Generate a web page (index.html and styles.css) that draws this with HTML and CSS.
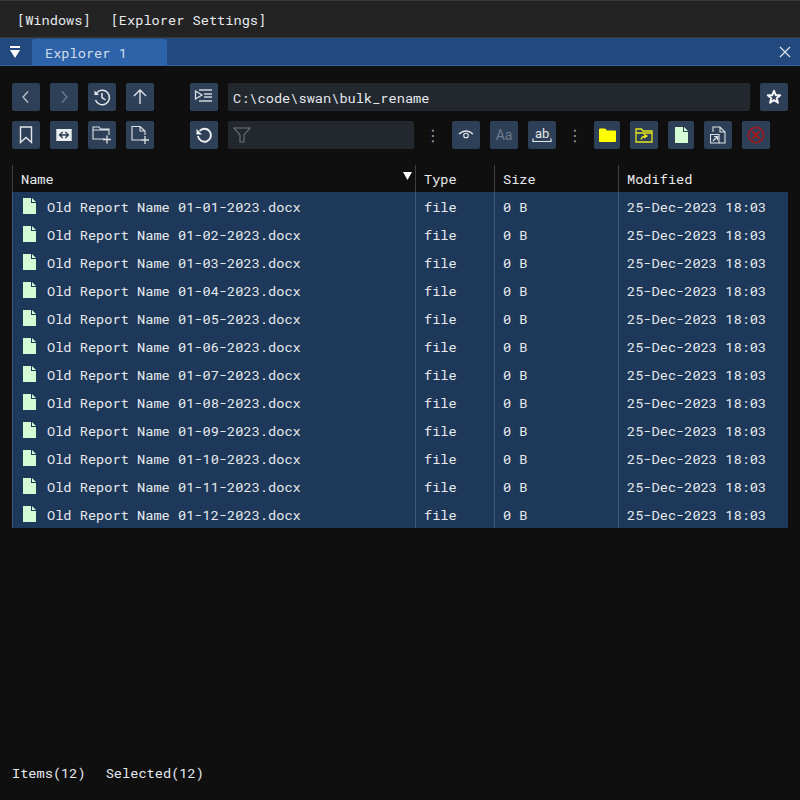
FILE: index.html
```html
<!DOCTYPE html>
<html lang="en">
<head>
<meta charset="utf-8">
<title>Explorer</title>
<link rel="stylesheet" href="styles.css">
</head>
<body>
<svg class="sprite" width="0" height="0">
  <symbol id="doc" viewBox="0 0 13 16"><path d="M0 0H8V5H13V16H0Z" fill="#d4fbd4"/><path d="M9 0L13 4H9Z" fill="#d4fbd4"/></symbol>
</svg>
<div class="menubar"><span>[Windows]</span><span>[Explorer Settings]</span></div>
<div class="tabbar">
  <svg class="collapse" width="12" height="12" viewBox="0 0 12 12"><path d="M1 0H11V2H1ZM1 4H11L6 12Z" fill="#fff"/></svg>
  <div class="tab">Explorer 1</div>
  <svg class="close" width="12" height="12" viewBox="0 0 12 12"><path d="M1 1L11 11M11 1L1 11" stroke="#dfe4ea" stroke-width="1.200" fill="none"/></svg>
</div>
<main class="window">
  <div class="toolbar">
    <div class="group">
      <button class="btn"><svg width="18" height="18" viewBox="0 0 18 18"><path d="M11 3.500L6 9L11 14.500" fill="none" stroke="#c2c8cf" stroke-width="1.200"/></svg></button>
      <button class="btn"><svg width="18" height="18" viewBox="0 0 18 18"><path d="M7 3.500L12 9L7 14.500" fill="none" stroke="#76808c" stroke-width="1.200"/></svg></button>
      <button class="btn"><svg width="20" height="20" viewBox="0 0 20 20"><path d="M4.300 6.500A7.200 7.200 0 1 1 3.500 13" fill="none" stroke="#e4e7ea" stroke-width="1.500"/><path d="M2.500 3.500V8H7" fill="#e4e7ea"/><path d="M10 6V10.500L13.500 13" fill="none" stroke="#e4e7ea" stroke-width="1.500"/></svg></button>
      <button class="btn"><svg width="18" height="18" viewBox="0 0 18 18"><path d="M9 16V2M3 8L9 2L15 8" fill="none" stroke="#e4e7ea" stroke-width="1.300"/></svg></button>
    </div>
    <button class="btn"><svg width="20" height="18" viewBox="0 0 20 18"><path d="M1.500 3L8 7L1.500 11Z" fill="none" stroke="#e4e7ea" stroke-width="1.200"/><path d="M5 2H18M10 6H18M10 9H18M5 13H18" fill="none" stroke="#cfd4d9" stroke-width="1.400"/></svg></button>
    <div class="field path">C:\code\swan\bulk_rename</div>
    <button class="btn"><svg width="16" height="16" viewBox="0 0 18 18"><path d="M9 2L11 7H16L12 10.300L13.500 15.500L9 12.500L4.500 15.500L6 10.300L2 7H7Z" fill="none" stroke="#f2f3f5" stroke-width="2.200" stroke-linejoin="round"/></svg></button>
  </div>
  <div class="toolbar">
    <div class="group">
      <button class="btn"><svg width="18" height="20" viewBox="0 0 18 20"><path d="M3.500 2H14.500V17.500L9 12.500L3.500 17.500Z" fill="none" stroke="#e4e7ea" stroke-width="1.400"/></svg></button>
      <button class="btn"><svg width="16" height="12" viewBox="0 0 18 14"><path d="M0 0H18V14H0Z" fill="#eceff1"/><path d="M7.500 3.500L3.800 7L7.500 10.500M10.500 3.500L14.200 7L10.500 10.500M4 7H14" fill="none" stroke="#2a3a50" stroke-width="1.500"/></svg></button>
      <button class="btn"><svg width="20" height="20" viewBox="0 0 20 20"><path d="M13 14H1V2H7L8.500 4H17V10M1 5H17" fill="none" stroke="#dde1e5" stroke-width="1.100"/><path d="M15 10.500V18.500M11 14.500H19" fill="none" stroke="#dde1e5" stroke-width="1.300"/></svg></button>
      <button class="btn"><svg width="20" height="20" viewBox="0 0 20 20"><path d="M11 15H2V1.500H10L15 6V10M10 1.500V6H15" fill="none" stroke="#dde1e5" stroke-width="1.100"/><path d="M15 11V19M11 15H19" fill="none" stroke="#dde1e5" stroke-width="1.300"/></svg></button>
    </div>
    <button class="btn"><svg width="18" height="18" viewBox="0 0 18 18"><path d="M4.500 5A6.500 6.500 0 1 1 3 10" fill="none" stroke="#f0f2f4" stroke-width="1.900"/><path d="M1.500 3V8.500H7" fill="#f0f2f4"/></svg></button>
    <div class="field filter"><svg width="18" height="16" viewBox="0 0 18 16"><path d="M1 1H17L11 8V15H7V8Z" fill="none" stroke="#6f747a" stroke-width="1.100"/></svg></div>
    <span class="dots">⋮</span>
    <div class="group">
      <button class="btn"><svg width="16" height="14" viewBox="0 0 16 14"><path d="M1 6Q8 0 15 6" fill="none" stroke="#e4e7ea" stroke-width="1.300"/><circle cx="8" cy="7.500" r="2.300" fill="none" stroke="#e4e7ea" stroke-width="1.100"/></svg></button>
      <button class="btn aa">Aa</button>
      <button class="btn"><svg class="ab-icon" width="20" height="18" viewBox="0 0 20 18"><text x="3" y="12" class="ab">ab</text><path d="M1 12.500V15.500H19V12.500" fill="none" stroke="#e4e7ea" stroke-width="1.200"/></svg></button>
    </div>
    <span class="dots">⋮</span>
    <div class="group">
      <button class="btn narrow"><svg width="17" height="14" viewBox="0 0 17 14"><path d="M0 1.500Q0 .5 1 .5H6L8 2.500H16Q17 2.500 17 3.500V13Q17 14 16 14H0Z" fill="#ffff00"/></svg></button>
      <button class="btn"><svg width="18" height="15" viewBox="0 0 18 15"><path d="M1 14V1H6.500L8 3H17V14ZM1 5H17" fill="none" stroke="#e4e41a" stroke-width="1.300"/><path d="M6 11.500Q7 8 11 8M9 6L12 8L9 10" fill="none" stroke="#e4e41a" stroke-width="1.300"/></svg></button>
      <button class="btn narrow"><svg width="13" height="16"><use href="#doc"/></svg></button>
      <button class="btn"><svg width="16" height="18" viewBox="0 0 16 18"><path d="M3 6V1H10L15 6V17H9M10 1V6H15" fill="none" stroke="#dde1e5" stroke-width="1.100"/><path d="M.5 8.500H9V17H.5Z" fill="#2e4058" stroke="#dde1e5" stroke-width="1.100"/><path d="M3 15L7 11M4 10.500H7.500V14" fill="none" stroke="#dde1e5" stroke-width="1.200"/></svg></button>
      <button class="btn"><svg width="18" height="18" viewBox="0 0 18 18"><circle cx="9" cy="9" r="7.500" fill="none" stroke="#a3181d" stroke-width="2" stroke-dasharray="3 .6"/><path d="M5.500 5.500L12.500 12.500M12.500 5.500L5.500 12.500" stroke="#a3181d" stroke-width="2"/></svg></button>
    </div>
  </div>
  <section class="table">
    <div class="row head"><div class="name">Name<svg class="sort" width="9" height="8" viewBox="0 0 9 8"><path d="M0 0H9L4.500 8Z" fill="#fff"/></svg></div><div>Type</div><div>Size</div><div>Modified</div></div>
    <div class="row"><div class="name"><svg width="13" height="16"><use href="#doc"/></svg>Old Report Name 01-01-2023.docx</div><div>file</div><div>0 B</div><div>25-Dec-2023 18:03</div></div>
    <div class="row"><div class="name"><svg width="13" height="16"><use href="#doc"/></svg>Old Report Name 01-02-2023.docx</div><div>file</div><div>0 B</div><div>25-Dec-2023 18:03</div></div>
    <div class="row"><div class="name"><svg width="13" height="16"><use href="#doc"/></svg>Old Report Name 01-03-2023.docx</div><div>file</div><div>0 B</div><div>25-Dec-2023 18:03</div></div>
    <div class="row"><div class="name"><svg width="13" height="16"><use href="#doc"/></svg>Old Report Name 01-04-2023.docx</div><div>file</div><div>0 B</div><div>25-Dec-2023 18:03</div></div>
    <div class="row"><div class="name"><svg width="13" height="16"><use href="#doc"/></svg>Old Report Name 01-05-2023.docx</div><div>file</div><div>0 B</div><div>25-Dec-2023 18:03</div></div>
    <div class="row"><div class="name"><svg width="13" height="16"><use href="#doc"/></svg>Old Report Name 01-06-2023.docx</div><div>file</div><div>0 B</div><div>25-Dec-2023 18:03</div></div>
    <div class="row"><div class="name"><svg width="13" height="16"><use href="#doc"/></svg>Old Report Name 01-07-2023.docx</div><div>file</div><div>0 B</div><div>25-Dec-2023 18:03</div></div>
    <div class="row"><div class="name"><svg width="13" height="16"><use href="#doc"/></svg>Old Report Name 01-08-2023.docx</div><div>file</div><div>0 B</div><div>25-Dec-2023 18:03</div></div>
    <div class="row"><div class="name"><svg width="13" height="16"><use href="#doc"/></svg>Old Report Name 01-09-2023.docx</div><div>file</div><div>0 B</div><div>25-Dec-2023 18:03</div></div>
    <div class="row"><div class="name"><svg width="13" height="16"><use href="#doc"/></svg>Old Report Name 01-10-2023.docx</div><div>file</div><div>0 B</div><div>25-Dec-2023 18:03</div></div>
    <div class="row"><div class="name"><svg width="13" height="16"><use href="#doc"/></svg>Old Report Name 01-11-2023.docx</div><div>file</div><div>0 B</div><div>25-Dec-2023 18:03</div></div>
    <div class="row"><div class="name"><svg width="13" height="16"><use href="#doc"/></svg>Old Report Name 01-12-2023.docx</div><div>file</div><div>0 B</div><div>25-Dec-2023 18:03</div></div>
  </section>
  <footer class="status"><span>Items(12)</span><span>Selected(12)</span></footer>
</main>
</body>
</html>
```
FILE: styles.css
```css
* { box-sizing: border-box; }
html, body { height: 100%; }
body {
  margin: 0;
  display: flex;
  flex-direction: column;
  height: 800px;
  overflow: hidden;
  background: #0f0f0f;
  color: #e6eaee;
  font-family: "Roboto Mono", "DejaVu Sans Mono", monospace;
  font-size: 13.65px;
}
.sprite { position: absolute; }
svg { display: block; flex: none; }
.menubar {
  height: 38px;
  flex: none;
  display: flex;
  align-items: center;
  gap: 20px;
  padding: 2px 0 0 17px;
  background: #232323;
  border-top: 1px solid #3a3a3a;
  border-bottom: 1px solid #3a3a3a;
}
.tabbar {
  height: 28px;
  flex: none;
  display: flex;
  align-items: flex-end;
  background: #234a7f;
  border-bottom: 1px solid #2f62a8;
}
.collapse { margin: 0 0 7px 9px; }
.tab {
  width: 135px;
  height: 26px;
  margin-left: 11px;
  padding: 5px 0 0 13px;
  background: #2e63a9;
  border-radius: 3px 3px 0 0;
  color: #cfdcea;
}
.close { margin: 0 9px 7px auto; }
.window {
  flex: 1;
  display: flex;
  flex-direction: column;
  padding: 17px 12px 0;
  min-height: 0;
}
.toolbar {
  display: flex;
  align-items: center;
  gap: 10px;
  height: 28px;
  margin-bottom: 10px;
}
.group { display: flex; gap: 10px; }
.group:first-child { margin-right: 26px; }
.btn {
  width: 28px;
  height: 28px;
  padding: 0;
  border: 0;
  border-radius: 2px;
  background: #2e4058;
  display: flex;
  align-items: center;
  justify-content: center;
  color: inherit;
  font: inherit;
}
.btn.narrow { width: 26px; }
.aa { color: #6d7a8b; font-family: "Roboto", sans-serif; font-size: 14px; }
.ab-icon { overflow: visible; }
.ab { font-family: "Roboto", sans-serif; font-size: 13px; fill: #e4e7ea; }
.field {
  height: 28px;
  border-radius: 2px;
  background: #23272e;
  display: flex;
  align-items: center;
  padding-left: 5px;
}
.path { flex: 1; padding-top: 2px; }
.filter { width: 186px; }
.dots { width: 18px; text-align: center; color: #9a9a9a; font-family: "DejaVu Sans", sans-serif; font-size: 16px; }
.table { margin-top: 6px; }
.row {
  display: grid;
  grid-template-columns: 403px 79px 124px 1fr;
  height: 28px;
  background: #1e3859;
}
.row > div {
  display: flex;
  align-items: center;
  padding: 1px 0 0 8px;
  border-left: 1px solid #3b5a80;
}
.row .name { gap: 11px; padding-left: 10px; }
.row .name svg { margin-top: -1px; }
.head { background: transparent; height: 27px; }
.head > div { border-left-color: #3e3e3e; padding-top: 0; }
.head .name { justify-content: space-between; padding-left: 8px; }
.head .name svg.sort { margin: -6px 3px 0 0; }
.status {
  margin-top: auto;
  height: 36px;
  display: flex;
  gap: 20px;
}
```
